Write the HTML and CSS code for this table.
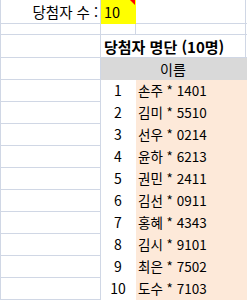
FILE: index.html
```html
<!DOCTYPE html>
<html lang="ko">
<head>
<meta charset="utf-8">
<link rel="stylesheet" href="styles.css">
</head>
<body>
<div class="sheet">
  <div class="c label">당첨자 수 :</div>
  <div class="c count">10<span class="note"></span></div>
  <div class="c"></div>
  <div class="c d"></div>

  <div class="c"></div>
  <div class="c"></div>
  <div class="c"></div>
  <div class="c d"></div>

  <div class="c"></div>
  <div class="c title">당첨자 명단 (10명)</div>
  <div class="c d"></div>

  <div class="c"></div>
  <div class="c head">이름</div>

  <div class="c"></div><div class="c num">1</div><div class="c name">손주 * 1401</div>
  <div class="c"></div><div class="c num">2</div><div class="c name">김미 * 5510</div>
  <div class="c"></div><div class="c num">3</div><div class="c name">선우 * 0214</div>
  <div class="c"></div><div class="c num">4</div><div class="c name">윤하 * 6213</div>
  <div class="c"></div><div class="c num">5</div><div class="c name">권민 * 2411</div>
  <div class="c"></div><div class="c num">6</div><div class="c name">김선 * 0911</div>
  <div class="c"></div><div class="c num">7</div><div class="c name">홍혜 * 4343</div>
  <div class="c"></div><div class="c num">8</div><div class="c name">김시 * 9101</div>
  <div class="c"></div><div class="c num">9</div><div class="c name">최은 * 7502</div>
  <div class="c"></div><div class="c num">10</div><div class="c name">도수 * 7103</div>
</div>
</body>
</html>
```
FILE: styles.css
```css
html, body {
  margin: 0;
  padding: 0;
  background: #fff;
  overflow: hidden;
}
body {
  width: 247px;
  height: 300px;
  font-family: "Noto Sans CJK KR", "Noto Sans", sans-serif;
  color: #000;
}
.sheet {
  display: grid;
  grid-template-columns: 100px 35px 110px 2px;
  grid-template-rows: 24px 11px 23px 22px repeat(10, 22px);
  border-left: 1px solid #d0d7e5;
  width: 248px;
}
.c {
  box-sizing: border-box;
  border-right: 1px solid #d0d7e5;
  border-bottom: 1px solid #d0d7e5;
  display: flex;
  align-items: flex-end;
  font-size: 14px;
  line-height: 18px;
  padding-bottom: 2px;
  white-space: nowrap;
  overflow: visible;
}
.d {
  border-right: none;
}
.label {
  justify-content: flex-end;
  padding-right: 2px;
  font-size: 14.5px;
  padding-bottom: 2px;
}
.count {
  position: relative;
  background: #ffff00;
  border-color: #ffff00;
  padding-left: 3px;
  font-size: 14.5px;
}
.note {
  position: absolute;
  top: 0;
  right: 0;
  width: 0;
  height: 0;
  border-top: 5px solid #ff0000;
  border-left: 5px solid transparent;
}
.title {
  grid-column: 2 / 4;
  font-weight: bold;
  font-size: 15px;
  padding-left: 3px;
  padding-bottom: 1px;
}
.head {
  grid-column: 2 / 5;
  background: #d9d9d9;
  border-color: #d9d9d9;
  justify-content: center;
  padding-right: 2px;
  padding-bottom: 1px;
}
.num {
  background: #fff;
  border-color: #fff;
  justify-content: center;
}
.name {
  grid-column: 3 / 5;
  background: #fde9d9;
  border-color: #fde9d9;
  padding-left: 2px;
  font-size: 13.5px;
}
```
